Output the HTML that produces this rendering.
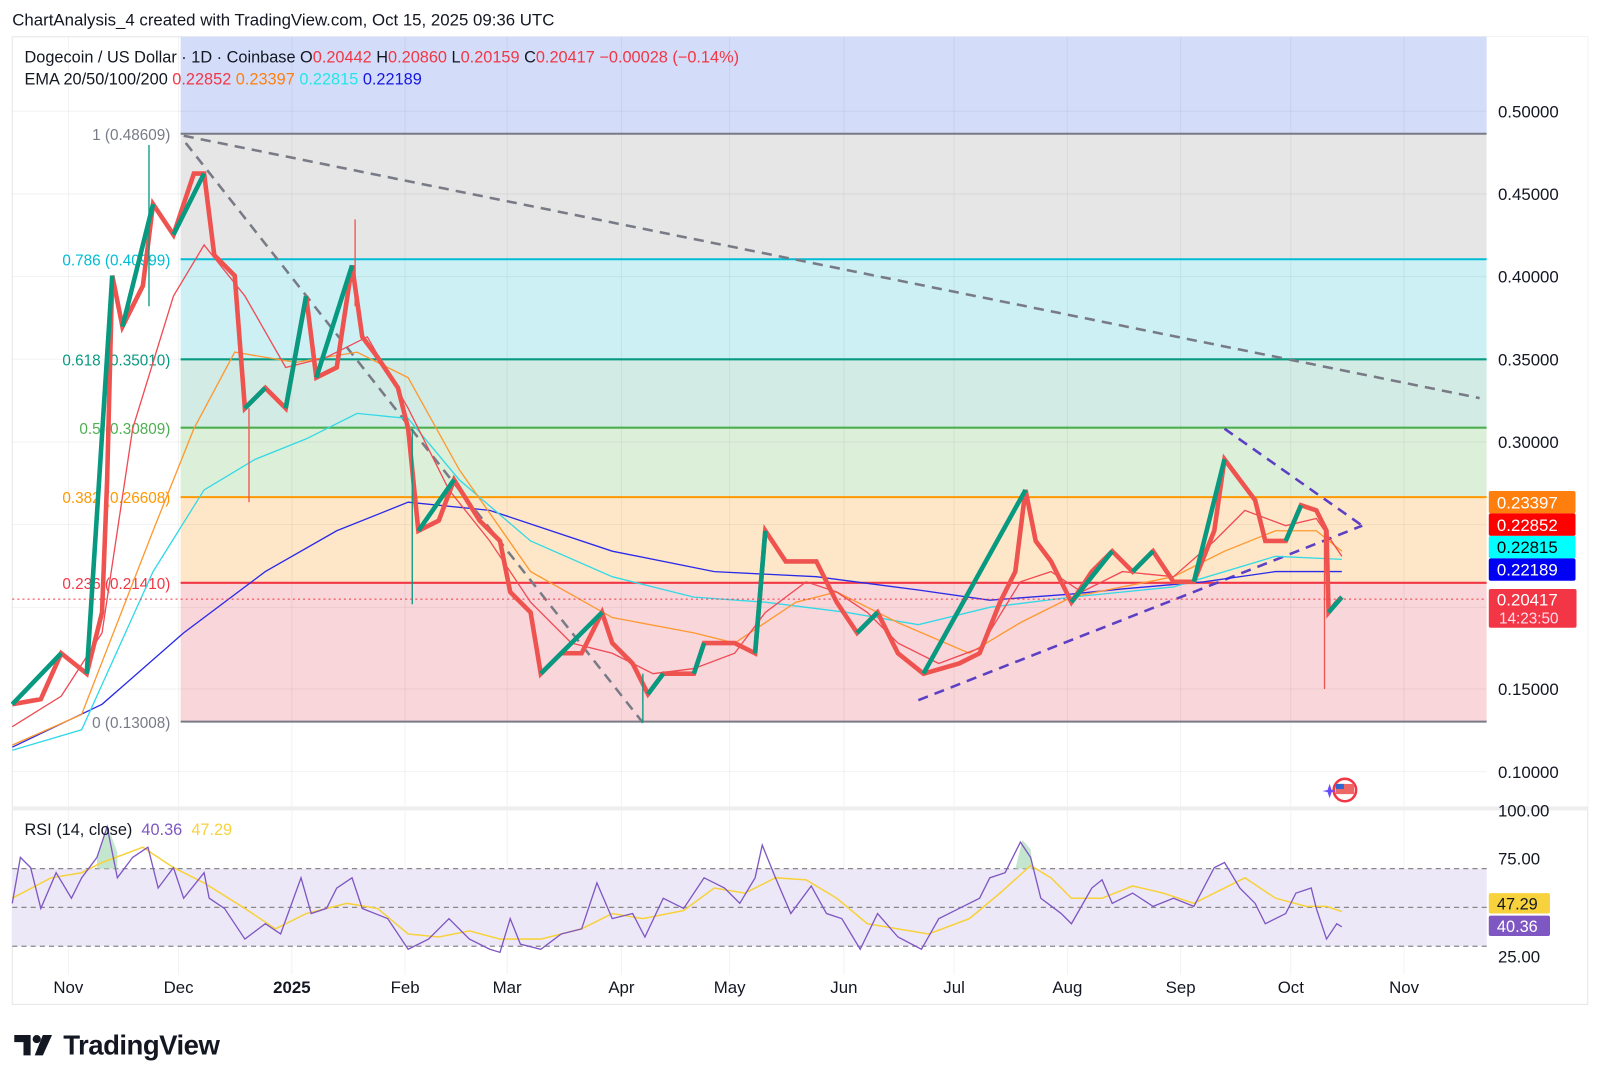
<!DOCTYPE html>
<html><head><meta charset="utf-8">
<style>
html,body{margin:0;padding:0;background:#fff;width:1600px;height:1084px;overflow:hidden}
svg{display:block}
text{font-family:"Liberation Sans",sans-serif}
</style></head><body>
<svg width="1600" height="1084" viewBox="0 0 1568 1062" preserveAspectRatio="none" xmlns="http://www.w3.org/2000/svg">
<rect width="1568" height="1062" fill="#fff"/>
<text x="12" y="25" font-size="16.5" fill="#131722">ChartAnalysis_4 created with TradingView.com, Oct 15, 2025 09:36 UTC</text>
<rect x="12" y="36" width="1544" height="948" fill="#fff" stroke="#e6e6e6"/>
<rect x="177" y="36" width="1280" height="95" fill="#d3ddfa"/>
<rect x="177" y="131" width="1280" height="123" fill="#e6e6e6"/>
<rect x="177" y="254" width="1280" height="98" fill="#ccf0f4"/>
<rect x="177" y="352" width="1280" height="67" fill="#d2ebe4"/>
<rect x="177" y="419" width="1280" height="68" fill="#dcefd9"/>
<rect x="177" y="487" width="1280" height="84" fill="#fde7c8"/>
<rect x="177" y="571" width="1280" height="136" fill="#f8d6da"/>
<g stroke="#000" stroke-opacity="0.05">
<path d="M67 36V955M175 36V955M286 36V955M397 36V955M497 36V955M609 36V955M715 36V955M827 36V955M935 36V955M1046 36V955M1157 36V955M1265 36V955M1376 36V955"/>
<path d="M12 109H1457M12 190H1457M12 271H1457M12 352H1457M12 433H1457M12 514H1457M12 595H1457M12 675H1457M12 756H1457"/>
</g>
<g stroke-width="2">
<line x1="177" y1="131" x2="1457" y2="131" stroke="#787b86"/>
<line x1="177" y1="254" x2="1457" y2="254" stroke="#00bcd4"/>
<line x1="177" y1="352" x2="1457" y2="352" stroke="#089981"/>
<line x1="177" y1="419" x2="1457" y2="419" stroke="#4caf50"/>
<line x1="177" y1="487" x2="1457" y2="487" stroke="#ff9800"/>
<line x1="177" y1="571" x2="1457" y2="571" stroke="#f23645"/>
<line x1="177" y1="707" x2="1457" y2="707" stroke="#787b86"/>
</g>
<g font-size="15">
<text x="167" y="137" text-anchor="end" fill="#787b86">1 (0.48609)</text>
<text x="167" y="260" text-anchor="end" fill="#00bcd4">0.786 (0.40999)</text>
<text x="167" y="358" text-anchor="end" fill="#089981">0.618 (0.35010)</text>
<text x="167" y="425" text-anchor="end" fill="#4caf50">0.5 (0.30809)</text>
<text x="167" y="493" text-anchor="end" fill="#ff9800">0.382 (0.26608)</text>
<text x="167" y="577" text-anchor="end" fill="#f23645">0.236 (0.21410)</text>
<text x="167" y="713" text-anchor="end" fill="#787b86">0 (0.13008)</text>
</g>
<g stroke-width="2.5" stroke-dasharray="10 7" fill="none">
<line x1="180" y1="133" x2="1450" y2="390" stroke="#787b86"/>
<line x1="182" y1="140" x2="630" y2="708" stroke="#787b86"/>
<line x1="900" y1="686" x2="1335" y2="515" stroke="#5b3fc4"/>
<line x1="1200" y1="420" x2="1335" y2="515" stroke="#5b3fc4"/>
</g>
<g fill="none" stroke-width="1.3">
<polyline stroke="#2a2ae8" points="12,732 100,690 180,620 260,560 330,520 400,492 480,500 600,540 700,560 800,565 900,578 970,588 1050,582 1100,577 1180,570 1250,560 1315,560"/>
<polyline stroke="#33d9e6" points="12,735 80,715 150,560 200,480 250,450 300,430 350,405 400,410 450,470 520,530 600,565 680,585 750,590 830,600 900,612 970,595 1050,585 1150,575 1250,545 1315,548"/>
<polyline stroke="#ff9830" points="12,730 80,700 150,520 190,420 230,345 290,355 350,345 400,370 450,460 520,560 600,605 680,620 720,630 780,590 820,580 880,610 950,640 1000,610 1050,585 1150,565 1200,540 1250,520 1290,520 1315,540"/>
<polyline stroke="#f04b55" points="12,712 60,682 100,620 130,420 170,290 200,240 240,290 280,360 320,350 360,330 400,400 440,480 480,530 520,590 560,630 600,640 640,660 680,655 720,640 750,600 790,570 820,580 850,600 880,630 920,650 960,635 1000,570 1030,560 1060,580 1100,560 1150,565 1190,530 1220,500 1260,515 1290,508 1315,545"/>
</g>
<polyline fill="none" stroke="#ef5350" stroke-width="4.5" points="12,690 40,685 60,640 85,660 100,600 105,470 110,270 120,320 140,280 150,200 170,230 190,170 200,170 210,250 230,270 240,400 260,380 280,400 300,290 310,370 330,360 345,260 355,330 370,350 390,380 400,420 410,520 430,510 445,470 470,510 490,530 500,580 520,600 530,660 550,640 570,640 590,600 600,630 620,650 635,680 650,660 680,660 690,630 720,630 740,640 750,520 770,550 800,550 820,590 840,620 860,600 880,640 905,660 940,650 960,640 980,590 995,560 1005,480 1015,530 1030,550 1050,590 1070,560 1090,540 1110,560 1130,540 1150,570 1170,570 1190,520 1200,450 1215,470 1230,490 1240,530 1260,530 1275,495 1290,500 1300,520 1302,600 1310,590 1315,585"/>
<path fill="none" stroke="#089981" stroke-width="4.5" d="M12 690L60 640M85 660L110 270M120 320L150 200M170 230L200 170M240 400L260 380M280 400L300 290M310 370L345 260M410 520L445 470M530 660L590 600M635 680L650 660M680 660L690 630M740 640L750 520M840 620L860 600M905 660L1005 480M1050 590L1090 540M1110 560L1130 540M1170 570L1200 450M1260 530L1275 495M1302 600L1315 585"/>
<g stroke-width="1.3">
<line x1="146" y1="142" x2="146" y2="300" stroke="#089981"/>
<line x1="244" y1="400" x2="244" y2="492" stroke="#ef5350"/>
<line x1="404" y1="420" x2="404" y2="592" stroke="#089981"/>
<line x1="348" y1="215" x2="348" y2="300" stroke="#ef5350"/>
<line x1="1298" y1="520" x2="1298" y2="675" stroke="#ef5350"/>
<line x1="630" y1="660" x2="630" y2="708" stroke="#089981"/>
</g>
<line x1="12" y1="587" x2="1457" y2="587" stroke="#f23645" stroke-dasharray="2 3"/>
<g font-size="16" xml:space="preserve">
<text x="24" y="61" fill="#131722">Dogecoin / US Dollar · 1D · Coinbase  O<tspan fill="#f23645">0.20442</tspan>  H<tspan fill="#f23645">0.20860</tspan>  L<tspan fill="#f23645">0.20159</tspan>  C<tspan fill="#f23645">0.20417</tspan>  <tspan fill="#f23645">−0.00028 (−0.14%)</tspan></text>
<text x="24" y="83" fill="#131722">EMA 20/50/100/200  <tspan fill="#f23645">0.22852</tspan>  <tspan fill="#ff7f0e">0.23397</tspan>  <tspan fill="#22e6e6">0.22815</tspan>  <tspan fill="#1515e0">0.22189</tspan></text>
</g>
<rect x="1457" y="36" width="99" height="755" fill="#fff"/>
<g font-size="16.5" fill="#131722">
<text x="1468" y="115">0.50000</text><text x="1468" y="196">0.45000</text><text x="1468" y="277">0.40000</text><text x="1468" y="358">0.35000</text><text x="1468" y="439">0.30000</text><text x="1468" y="681">0.15000</text><text x="1468" y="762">0.10000</text>
</g>
<g font-size="16.5">
<rect x="1459" y="481" width="85" height="22" rx="2" fill="#ff7f0e"/><text x="1467" y="498" fill="#fff">0.23397</text>
<rect x="1459" y="503" width="85" height="22" rx="2" fill="#f00"/><text x="1467" y="520" fill="#fff">0.22852</text>
<rect x="1459" y="525" width="85" height="22" rx="2" fill="#0ff"/><text x="1467" y="542" fill="#000">0.22815</text>
<rect x="1459" y="547" width="85" height="22" rx="2" fill="#0000f5"/><text x="1467" y="564" fill="#fff">0.22189</text>
<rect x="1459" y="577" width="86" height="38" rx="2" fill="#f23645"/><text x="1467" y="593" fill="#fff">0.20417</text><text x="1469" y="611" fill="#fde" font-size="15">14:23:50</text>
</g>
<circle cx="1318" cy="774" r="11" fill="#fff" stroke="#f23645" stroke-width="2.5"/>
<rect x="1309" y="768" width="18" height="10" fill="#e66"/><rect x="1309" y="768" width="8" height="5" fill="#36c"/>
<path d="M1303 768l2 6 5 1-5 1-2 6-2-6-5-1 5-1z" fill="#6a4cff"/>
<rect x="12" y="790" width="1544" height="4" fill="#eee"/>
<rect x="12" y="851" width="1445" height="76" fill="#ede8f8"/>
<g stroke="#888" stroke-dasharray="5 4" stroke-width="1.2">
<line x1="12" y1="851" x2="1457" y2="851"/><line x1="12" y1="889" x2="1457" y2="889"/><line x1="12" y1="927" x2="1457" y2="927"/>
</g>
<path d="M95 840L105 808L115 835L115 851L95 851Z M995 851L1002 823L1010 832L1012 851Z" fill="#b7e0c2" opacity="0.8"/>
<polyline fill="none" stroke="#f7d23c" stroke-width="1.5" points="12,880 50,860 80,855 100,845 140,830 170,850 200,865 240,890 270,910 300,895 340,885 370,890 400,915 430,918 460,912 490,920 530,920 570,910 600,895 630,900 670,892 700,870 730,875 760,860 790,862 820,880 850,905 880,910 910,915 950,900 980,875 1010,848 1030,860 1050,880 1080,880 1110,868 1140,875 1170,885 1200,870 1220,860 1250,880 1280,888 1300,888 1315,893"/>
<polyline fill="none" stroke="#7e57c2" stroke-width="1.3" points="12,885 20,840 30,850 40,890 55,855 70,880 80,860 95,840 105,810 115,860 130,840 145,830 155,870 170,850 180,880 200,855 205,880 220,890 240,920 260,905 275,915 295,860 305,895 320,890 330,870 345,860 355,890 380,900 400,930 420,920 440,900 460,920 480,930 490,933 500,900 510,925 530,930 550,915 570,910 585,865 600,900 620,895 632,918 650,880 670,890 690,860 710,870 725,885 740,860 747,828 760,860 775,895 795,868 810,895 825,900 843,930 860,895 880,918 903,930 920,900 940,890 960,880 970,860 985,855 1000,825 1010,840 1020,880 1040,895 1050,905 1070,870 1080,862 1090,885 1110,875 1130,888 1150,880 1170,888 1190,850 1200,845 1215,870 1230,885 1240,905 1260,895 1270,875 1285,870 1290,890 1300,920 1310,905 1315,908"/>
<text x="24" y="818" font-size="16" fill="#131722" xml:space="preserve">RSI (14, close)  <tspan fill="#7e57c2">40.36</tspan>  <tspan fill="#f7d23c">47.29</tspan></text>
<g font-size="16.5" fill="#131722">
<text x="1468" y="800">100.00</text><text x="1468" y="847">75.00</text><text x="1468" y="943">25.00</text>
</g>
<rect x="1459" y="875" width="60" height="20" rx="2" fill="#f7d23c"/><text x="1467" y="891" font-size="16" fill="#131722">47.29</text>
<rect x="1459" y="897" width="60" height="20" rx="2" fill="#7e57c2"/><text x="1467" y="913" font-size="16" fill="#fff">40.36</text>
<g font-size="16.5" fill="#131722" text-anchor="middle">
<text x="67" y="973">Nov</text><text x="175" y="973">Dec</text><text x="286" y="973" font-weight="bold">2025</text><text x="397" y="973">Feb</text><text x="497" y="973">Mar</text><text x="609" y="973">Apr</text><text x="715" y="973">May</text><text x="827" y="973">Jun</text><text x="935" y="973">Jul</text><text x="1046" y="973">Aug</text><text x="1157" y="973">Sep</text><text x="1265" y="973">Oct</text><text x="1376" y="973">Nov</text>
</g>
<g fill="#131722">
<path d="M14 1014h16v20h-7v-13h-9z"/><circle cx="36" cy="1018" r="4"/><path d="M42 1014h9l-9 20h-8z"/>
<text x="62" y="1033" font-size="27" font-weight="bold" letter-spacing="-0.5">TradingView</text>
</g>
</svg>
</body></html>
